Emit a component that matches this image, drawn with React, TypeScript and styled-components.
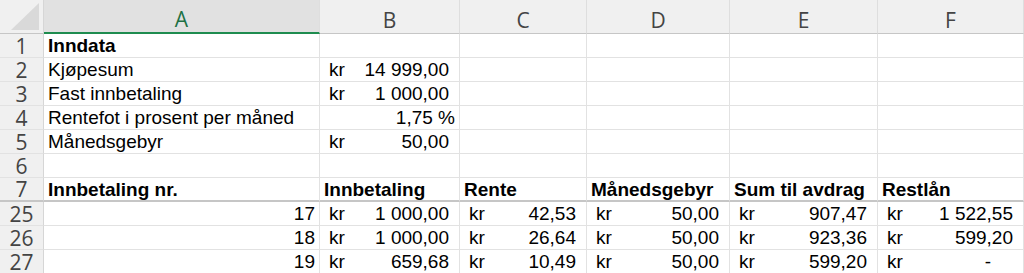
import React from 'react'
import styled, { createGlobalStyle, css } from 'styled-components'

const GlobalStyle = createGlobalStyle`
  html, body {
    margin: 0;
    padding: 0;
    background: #ffffff;
    overflow: hidden;
  }
`

const columns = ['A', 'B', 'C', 'D', 'E', 'F']
const widths = [276, 140, 127, 143, 148, 146]

type Value =
  | { kind: 'text'; text: string; bold?: boolean }
  | { kind: 'num'; text: string }
  | { kind: 'pct'; text: string }
  | { kind: 'kr'; text: string; dash?: boolean }
  | { kind: 'empty' }

const E: Value = { kind: 'empty' }
const t = (text: string, bold = false): Value => ({ kind: 'text', text, bold })
const kr = (text: string): Value => ({ kind: 'kr', text })

const rows: { n: number; frozen?: boolean; cells: Value[] }[] = [
  { n: 1, cells: [t('Inndata', true), E, E, E, E, E] },
  { n: 2, cells: [t('Kjøpesum'), kr('14 999,00'), E, E, E, E] },
  { n: 3, cells: [t('Fast innbetaling'), kr('1 000,00'), E, E, E, E] },
  { n: 4, cells: [t('Rentefot i prosent per måned'), { kind: 'pct', text: '1,75 %' }, E, E, E, E] },
  { n: 5, cells: [t('Månedsgebyr'), kr('50,00'), E, E, E, E] },
  { n: 6, cells: [E, E, E, E, E, E] },
  {
    n: 7,
    frozen: true,
    cells: [
      t('Innbetaling nr.', true),
      t('Innbetaling', true),
      t('Rente', true),
      t('Månedsgebyr', true),
      t('Sum til avdrag', true),
      t('Restlån', true),
    ],
  },
  {
    n: 25,
    cells: [{ kind: 'num', text: '17' }, kr('1 000,00'), kr('42,53'), kr('50,00'), kr('907,47'), kr('1 522,55')],
  },
  {
    n: 26,
    cells: [{ kind: 'num', text: '18' }, kr('1 000,00'), kr('26,64'), kr('50,00'), kr('923,36'), kr('599,20')],
  },
  {
    n: 27,
    cells: [
      { kind: 'num', text: '19' },
      kr('659,68'),
      kr('10,49'),
      kr('50,00'),
      kr('599,20'),
      { kind: 'kr', text: '-', dash: true },
    ],
  },
]

export default function App() {
  return (
    <>
      <GlobalStyle />
      <Sheet>
        <Corner />
        {columns.map((c, i) => (
          <ColHeader key={c} $active={i === 0}>
            {c}
          </ColHeader>
        ))}
        {rows.map((row) => (
          <React.Fragment key={row.n}>
            <RowHeader $frozen={row.frozen}>{row.n}</RowHeader>
            {row.cells.map((v, i) => (
              <CellView key={i} value={v} frozen={row.frozen} />
            ))}
          </React.Fragment>
        ))}
      </Sheet>
    </>
  )
}

const CellView = ({ value, frozen }: { value: Value; frozen?: boolean }) => {
  switch (value.kind) {
    case 'text':
      return (
        <Cell $frozen={frozen} $bold={value.bold}>
          {value.text}
        </Cell>
      )
    case 'num':
    case 'pct':
      return (
        <Cell $frozen={frozen} $right>
          {value.text}
        </Cell>
      )
    case 'kr':
      return (
        <AcctCell $frozen={frozen}>
          <span>kr</span>
          <Amount $dash={value.dash}>{value.text}</Amount>
        </AcctCell>
      )
    default:
      return <Cell $frozen={frozen} />
  }
}

const Sheet = styled.div`
  display: grid;
  grid-template-columns: 44px ${widths.map((w) => `${w}px`).join(' ')};
  grid-template-rows: 34px repeat(${rows.length}, 24px);
  width: 1024px;
  height: 273px;
  overflow: hidden;
  background: #ffffff;
`

const Corner = styled.div`
  position: relative;
  box-sizing: border-box;
  background: #f0f0f0;
  border-right: 1px solid #d6d6d6;
  border-bottom: 1px solid #c6c6c6;

  &:after {
    content: '';
    position: absolute;
    right: 4px;
    bottom: 3px;
    width: 28px;
    height: 27px;
    background: #d9d9d9;
    clip-path: polygon(100% 0, 100% 100%, 0 100%);
  }
`

const ColHeader = styled.div<{ $active?: boolean }>`
  box-sizing: border-box;
  display: flex;
  align-items: center;
  justify-content: center;
  padding-top: 6px;
  font-family: 'Open Sans', 'Noto Sans', sans-serif;
  font-size: 21px;
  line-height: 24px;
  color: #444444;
  background: #f0f0f0;
  border-right: 1px solid #dedede;
  border-bottom: 1px solid #c6c6c6;

  ${({ $active }) =>
    $active &&
    css`
      background: #e1e1e1;
      color: #1e7145;
      border-bottom: 2px solid #1e8c4f;
    `}
`

const RowHeader = styled.div<{ $frozen?: boolean }>`
  box-sizing: border-box;
  display: flex;
  align-items: center;
  justify-content: center;
  font-family: 'Open Sans', 'Noto Sans', sans-serif;
  font-size: 21px;
  line-height: 22px;
  color: #444444;
  background: #f0f0f0;
  border-right: 1px solid #d6d6d6;
  border-bottom: ${({ $frozen }) => ($frozen ? '2px solid #c6c6c6' : '1px solid #e2e2e2')};
`

const Cell = styled.div<{ $frozen?: boolean; $bold?: boolean; $right?: boolean }>`
  box-sizing: border-box;
  min-width: 0;
  padding: 0 4px;
  font-family: 'Liberation Sans', Arial, sans-serif;
  font-size: 19px;
  line-height: 23px;
  white-space: nowrap;
  color: #000000;
  text-align: ${({ $right }) => ($right ? 'right' : 'left')};
  font-weight: ${({ $bold }) => ($bold ? 700 : 400)};
  border-right: 1px solid #e2e2e2;
  border-bottom: ${({ $frozen }) => ($frozen ? '2px solid #c6c6c6' : '1px solid #e2e2e2')};
`

const AcctCell = styled.div<{ $frozen?: boolean }>`
  box-sizing: border-box;
  display: flex;
  justify-content: space-between;
  padding: 0 10px 0 9px;
  font-family: 'Liberation Sans', Arial, sans-serif;
  font-size: 19px;
  line-height: 23px;
  white-space: nowrap;
  color: #000000;
  border-right: 1px solid #e2e2e2;
  border-bottom: ${({ $frozen }) => ($frozen ? '2px solid #c6c6c6' : '1px solid #e2e2e2')};
`

const Amount = styled.span<{ $dash?: boolean }>`
  padding-right: ${({ $dash }) => ($dash ? '22px' : '0')};
`
